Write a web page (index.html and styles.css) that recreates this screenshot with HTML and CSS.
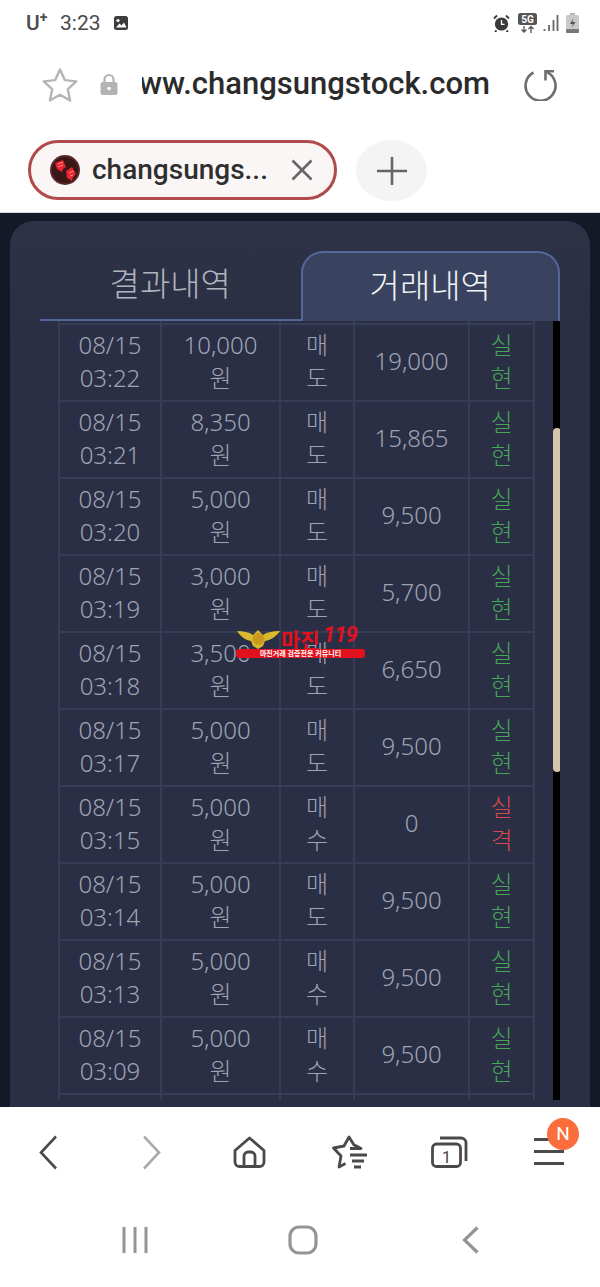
FILE: index.html
```html
<!DOCTYPE html>
<html lang="ko">
<head>
<meta charset="utf-8">
<title>거래내역</title>
<link rel="stylesheet" href="styles.css">
</head>
<body>
<div class="phone">
  <header class="status">
    <span class="carrier">U<sup>+</sup></span>
    <span class="clock">3:23</span>
    <svg class="st-img" viewBox="0 0 16 16"><rect x="1" y="1" width="14" height="14" rx="2.500" fill="#3c3c3c"/><circle cx="5" cy="5.500" r="1.600" fill="#fff"/><path d="M3 12.500l3.500-4 2 2 2.500-3 2.500 5z" fill="#fff"/></svg>
    <span class="st-space"></span>
    <svg class="st-alarm" viewBox="0 0 17 18"><circle cx="8.500" cy="10" r="6.600" fill="#3a3a3a"/><path d="M8.500 6v4.300h3" fill="none" stroke="#fff" stroke-width="1.300"/><path d="M1 4.500l3-3M16 4.500l-3-3M3.500 16.500l-1.500 1.500M13.500 16.500l1.500 1.500" stroke="#3a3a3a" stroke-width="1.800"/></svg>
    <svg class="st-5g" viewBox="0 0 19 20"><rect x="0" y="0" width="19" height="12" rx="2.500" fill="#555"/><text x="9.500" y="10" class="st-5g-text" text-anchor="middle">5G</text><path d="M6 13v6M3.500 16.500l2.500 2.500 2.500-2.500M13 20v-6.500M10.500 16l2.500-2.500 2.500 2.500" fill="none" stroke="#555" stroke-width="1.300"/></svg>
    <svg class="st-signal" viewBox="0 0 16 18"><path d="M1.500 15v2M6 11v6M10.500 6v11M14.500 1v16" stroke="#666" stroke-width="1.800"/></svg>
    <svg class="st-batt" viewBox="0 0 13 20"><rect x="4" y="0" width="5" height="2" fill="#b5b5b5"/><rect x="0" y="2" width="13" height="18" rx="1.500" fill="#c9c9c9"/><rect x="0" y="16" width="13" height="4" rx="1" fill="#777"/><path d="M7.500 5l-3.500 6h3l-1.500 4 4-6h-3z" fill="#555"/></svg>
  </header>

  <div class="urlbar">
    <svg class="ic-star" viewBox="0 0 36 35"><path d="M18 2.500l4.800 10.600 11.500 1.300-8.500 7.800 2.300 11.300L18 27.800 7.900 33.500l2.300-11.300-8.500-7.800 11.500-1.300z" fill="none" stroke="#b5b5b5" stroke-width="2.400" stroke-linejoin="round"/></svg>
    <svg class="ic-lock" viewBox="0 0 18 22"><path d="M4.500 10V6.500a4.500 4.500 0 0 1 9 0V10" fill="none" stroke="#b3b3b3" stroke-width="2.200"/><rect x="0.500" y="9" width="17" height="13" rx="2.500" fill="#b3b3b3"/><circle cx="9" cy="15.500" r="1.800" fill="#fff"/></svg>
    <div class="url"><span class="url-inner">www.changsungstock.com</span></div>
    <svg class="ic-reload" viewBox="0 0 34 33"><path d="M10.500 4.500A15 15 0 1 0 24 4.200" fill="none" stroke="#6e6e6e" stroke-width="2.600"/><path d="M22.500 12.500V3.200H31" fill="none" stroke="#6e6e6e" stroke-width="2.600"/></svg>
  </div>

  <div class="tabstrip">
    <div class="pill">
      <svg class="fav" viewBox="0 0 30 30"><circle cx="15" cy="15" r="15" fill="#5a2a2a"/><circle cx="15" cy="15" r="13" fill="#3a1616"/><path d="M5 8l8-3 3 7-3 2-1 3-5-3zM16 16l6-4 4 7-3 3-1 4-5-3z" fill="#e8252f"/><path d="M8 9l5-2M8 12l5-2M19 18l5-2M20 21l3-1" stroke="#ff8a8a" stroke-width="1"/></svg>
    <span class="pill-title">changsungs...</span>
      <svg class="ic-x" viewBox="0 0 22 22"><path d="M1.500 1.500l19 19M20.500 1.500l-19 19" stroke="#666" stroke-width="2.600"/></svg>
    </div>
    <div class="addtab"><svg class="ic-plus" viewBox="0 0 30 28"><path d="M15 0v28M0 14h30" stroke="#666" stroke-width="2.600"/></svg></div>
  </div>

  <main class="page">
    <section class="panel">
      <div class="tabs">
        <div class="tab">결과내역</div>
        <div class="tab tab-active">거래내역</div>
      </div>
      <div class="scroller">
        <div class="tablewrap">
          <table class="trades">
            <colgroup><col class="c1"><col class="c2"><col class="c3"><col class="c4"><col class="c5"></colgroup>
            <tbody>
              <tr class="stub"><td></td><td></td><td></td><td></td><td></td></tr>
              <tr><td>08/15<br>03:22</td><td>10,000<br>원</td><td>매<br>도</td><td>19,000</td><td class="ok">실<br>현</td></tr>
              <tr><td>08/15<br>03:21</td><td>8,350<br>원</td><td>매<br>도</td><td>15,865</td><td class="ok">실<br>현</td></tr>
              <tr><td>08/15<br>03:20</td><td>5,000<br>원</td><td>매<br>도</td><td>9,500</td><td class="ok">실<br>현</td></tr>
              <tr><td>08/15<br>03:19</td><td>3,000<br>원</td><td>매<br>도</td><td>5,700</td><td class="ok">실<br>현</td></tr>
              <tr><td>08/15<br>03:18</td><td>3,500<br>원</td><td>매<br>도</td><td>6,650</td><td class="ok">실<br>현</td></tr>
              <tr><td>08/15<br>03:17</td><td>5,000<br>원</td><td>매<br>도</td><td>9,500</td><td class="ok">실<br>현</td></tr>
              <tr><td>08/15<br>03:15</td><td>5,000<br>원</td><td>매<br>수</td><td>0</td><td class="bad">실<br>격</td></tr>
              <tr><td>08/15<br>03:14</td><td>5,000<br>원</td><td>매<br>도</td><td>9,500</td><td class="ok">실<br>현</td></tr>
              <tr><td>08/15<br>03:13</td><td>5,000<br>원</td><td>매<br>수</td><td>9,500</td><td class="ok">실<br>현</td></tr>
              <tr><td>08/15<br>03:09</td><td>5,000<br>원</td><td>매<br>수</td><td>9,500</td><td class="ok">실<br>현</td></tr>
              <tr><td>&nbsp;</td><td></td><td></td><td></td><td></td></tr>
            </tbody>
          </table>
        </div>
        <div class="track"><div class="thumb"></div></div>
      </div>
    </section>
    <div class="mark">
      <svg class="mark-eagle" viewBox="0 0 43 22"><path d="M0 3c6 0 12 1 16 4l5-5 5 5c4-3 11-4 17-4-3 5-9 9-15 10l-2 5-5 3-5-3-2-5C8 12 3 8 0 3z" fill="#d9b92e"/><circle cx="21.500" cy="11" r="6" fill="#c99a1e"/></svg>
      <span class="mark-title">마진</span><span class="mark-num">119</span>
      <div class="mark-bar">마진거래 검증전문 커뮤니티</div>
    </div>
  </main>

  <nav class="browsernav">
    <svg class="n-back" viewBox="0 0 18 35"><path d="M17 1.500L2 17.500l15 16" fill="none" stroke="#4a4a4a" stroke-width="2.600"/></svg>
    <svg class="n-fwd" viewBox="0 0 18 35"><path d="M1 1.500l15 16-15 16" fill="none" stroke="#ababab" stroke-width="2.600"/></svg>
    <svg class="n-home" viewBox="0 0 33 32"><path d="M2 14.500L16.500 2 31 14.500V26a4.500 4.500 0 0 1-4.500 4.500h-20A4.500 4.500 0 0 1 2 26z" fill="none" stroke="#4a4a4a" stroke-width="2.800" stroke-linejoin="round"/><path d="M11 30V20a4 4 0 0 1 4-4h3a4 4 0 0 1 4 4v10" fill="none" stroke="#4a4a4a" stroke-width="2.800"/></svg>
    <svg class="n-star" viewBox="0 0 36 34"><path d="M19 13.500h11l-4.500-2.500-2.500-1L18 2l-5 9-10.500 2 7.500 8-2 11 6.500-3.500" fill="none" stroke="#4a4a4a" stroke-width="2.800" stroke-linejoin="round"/><path d="M19 20h17M21 26h12M23 32h7" stroke="#4a4a4a" stroke-width="2.800"/></svg>
    <svg class="n-tabs" viewBox="0 0 37 32"><rect x="1.500" y="8" width="28" height="22.500" rx="4" fill="none" stroke="#4a4a4a" stroke-width="2.800"/><path d="M9 2h21a5 5 0 0 1 5 5v18" fill="none" stroke="#4a4a4a" stroke-width="2.800"/><text x="15.500" y="26.500" class="n-tabs-num" text-anchor="middle">1</text></svg>
    <div class="n-menu">
      <span class="bar"></span><span class="bar"></span><span class="bar"></span>
      <span class="badge">N</span>
    </div>
  </nav>

  <nav class="sysnav">
    <svg class="s-recent" viewBox="0 0 26 28"><path d="M2 1v26M13 1v26M24 1v26" stroke="#959595" stroke-width="3"/></svg>
    <svg class="s-home" viewBox="0 0 30 30"><rect x="2" y="2" width="26" height="26" rx="9" fill="none" stroke="#959595" stroke-width="3.200"/></svg>
    <svg class="s-back" viewBox="0 0 17 28"><path d="M15.500 1.500L2.500 14l13 12.500" fill="none" stroke="#959595" stroke-width="3.200"/></svg>
  </nav>
</div>
</body>
</html>
```

FILE: styles.css
```css
* { box-sizing: border-box; }
html, body { margin: 0; padding: 0; }
body { font-family: "Noto Sans CJK KR", "Noto Sans", sans-serif; background: #fff; }
svg { display: block; flex: none; }

.phone { width: 600px; height: 1287px; display: flex; flex-direction: column; overflow: hidden; background: #fff; }

/* status bar */
.status { height: 46px; flex: none; display: flex; align-items: center; padding-left: 26px; font-family: Roboto, sans-serif; color: #4a4a4a; }
.carrier { font-size: 21px; font-weight: 500; width: 34px; }
.carrier sup { font-size: 14px; line-height: 0; font-weight: 700; }
.clock { font-size: 21px; width: 53px; }
.st-img { width: 16px; height: 16px; }
.st-space { flex: 1; }
.st-alarm { width: 17px; height: 18px; margin-right: 8px; }
.st-5g { width: 19px; height: 20px; margin-right: 6px; }
.st-5g-text { font: 700 10px Roboto, sans-serif; fill: #fff; }
.st-signal { width: 16px; height: 18px; margin-right: 7px; }
.st-batt { width: 13px; height: 20px; margin-right: 21px; }

/* url bar */
.urlbar { height: 76px; flex: none; display: flex; align-items: center; padding-left: 42px; }
.ic-star { width: 36px; height: 35px; }
.ic-lock { width: 18px; height: 22px; margin-left: 22px; }
.url { width: 348px; margin-left: 24px; overflow: hidden; display: flex; justify-content: flex-end; font: 500 31px/38px Roboto, sans-serif; color: #2b2b2b; white-space: nowrap; }
.url-inner { flex: none; }
.ic-reload { width: 34px; height: 33px; margin-left: 33px; }

/* tab strip */
.tabstrip { height: 90px; flex: none; display: flex; align-items: flex-start; padding: 18px 0 0 28px; }
.pill { width: 309px; height: 60px; border: 3px solid #b14b4b; border-radius: 30px; background: #faf6f5; display: flex; align-items: center; padding-left: 19px; }
.fav { width: 30px; height: 30px; }
.pill-title { width: 199px; margin-left: 12px; font: 500 28px/34px Roboto, sans-serif; color: #2f2f2f; white-space: nowrap; }
.ic-x { width: 22px; height: 22px; }
.addtab { width: 71px; height: 61px; margin-left: 19px; border-radius: 50%; background: #f4f4f4; display: flex; align-items: center; justify-content: center; }
.ic-plus { width: 30px; height: 28px; }

/* page */
.page { flex: 1; min-height: 0; position: relative; overflow: hidden; background: #141827; padding: 8px 10px 0; border-top: 1px solid #d8dadf; }
.panel { height: 900px; border-radius: 24px 24px 0 0; background: linear-gradient(#2d3246, #2a2f45 120px); padding: 30px 30px 0; }
.tabs { display: flex; height: 70px; align-items: stretch; }
.tab { width: 261px; display: flex; align-items: center; justify-content: center; font-size: 33px; font-weight: 300; color: #b0b4bf; border-bottom: 2px solid #55679a; padding-bottom: 6px; }
.tab-active { width: 260px; border: 2px solid #55679a; border-bottom: 0; border-radius: 22px 22px 0 0; background: #39435f; color: #f2f3f7; }

.scroller { display: flex; height: 779px; overflow: hidden; }
.tablewrap { width: 513px; padding-left: 18px; flex: none; overflow: hidden; }
.trades { width: 476px; table-layout: fixed; border-collapse: collapse; margin-top: -1px; }
.c1 { width: 102px; } .c2 { width: 119px; } .c3 { width: 74px; } .c4 { width: 115px; } .c5 { width: 65px; }
.trades td { border: 2px solid #373d55; text-align: center; padding: 0 0 4px; height: 77px; font-family: "Noto Sans", "Noto Sans CJK KR", sans-serif; font-size: 24px; font-weight: 300; line-height: 33px; color: #9fa4b5; }
.trades .stub td { height: 4px; padding: 0; border-top: 0; }
.trades .ok { color: #46a657; }
.trades .bad { color: #d9484f; }
.track { width: 8px; background: #000; padding-top: 107px; flex: none; }
.thumb { height: 344px; background: #d6c7ab; border-radius: 4px; }

/* watermark */
.mark { position: absolute; left: 236px; top: 415px; width: 129px; height: 31px; color: #e3101d; }
.mark-eagle { position: absolute; left: 1px; top: 0; width: 43px; height: 22px; }
.mark-title { position: absolute; left: 45px; top: -1px; font-size: 21px; line-height: 24px; font-weight: 700; }
.mark-num { position: absolute; left: 87px; top: -3px; font: italic 700 22px/20px Roboto, sans-serif; letter-spacing: -1px; }
.mark-bar { position: absolute; left: 0; top: 21px; width: 129px; height: 9px; background: #e3101d; border-radius: 3px; color: #fff; font-size: 7px; line-height: 9px; text-align: center; font-weight: 700; white-space: nowrap; }

/* bottom bars */
.browsernav { height: 92px; flex: none; background: #fff; display: flex; align-items: flex-start; padding: 28px 0 0 39px; }
.n-back, .n-fwd { width: 18px; height: 35px; }
.n-fwd { margin-left: 86px; }
.n-home { width: 33px; height: 32px; margin-left: 72px; margin-top: 1px; }
.n-star { width: 36px; height: 34px; margin-left: 65px; }
.n-tabs { width: 37px; height: 32px; margin-left: 64px; margin-top: 1px; }
.n-tabs-num { font: 400 17px Roboto, sans-serif; fill: #4a4a4a; }
.n-menu { width: 30px; height: 27px; margin-left: 66px; margin-top: 3px; position: relative; display: flex; flex-direction: column; justify-content: space-between; }
.bar { display: block; height: 3px; background: #4a4a4a; }
.badge { position: absolute; left: 13px; top: -20px; width: 32px; height: 32px; border-radius: 50%; background: #fb6d3a; color: #fff; font: 400 19px/32px Roboto, sans-serif; text-align: center; }
.sysnav { height: 88px; flex: none; background: #fff; display: flex; align-items: flex-start; padding: 27px 0 0 122px; }
.s-recent { width: 26px; height: 28px; }
.s-home { width: 30px; height: 30px; margin-left: 140px; margin-top: -1px; }
.s-back { width: 17px; height: 28px; margin-left: 144px; }
```
